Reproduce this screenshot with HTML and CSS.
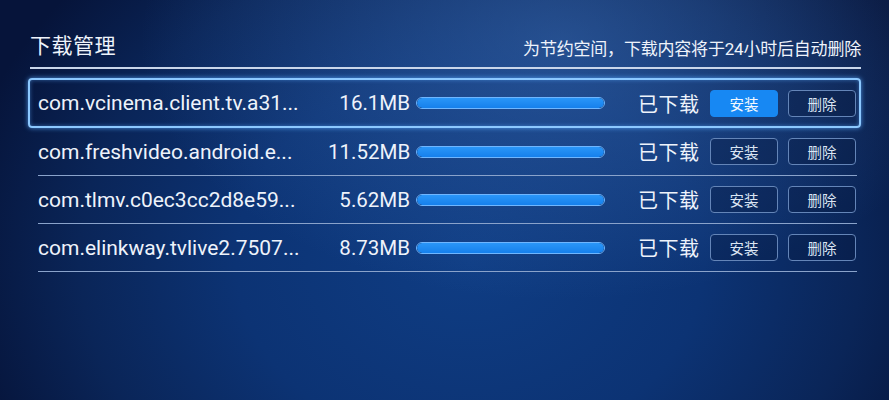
FILE: index.html
```html
<!DOCTYPE html>
<html lang="zh-CN">
<head>
<meta charset="utf-8">
<title>下载管理</title>
<link rel="stylesheet" href="styles.css">
</head>
<body>
<div class="screen">
  <header class="header">
    <h1 class="title">下载管理</h1>
    <p class="note">为节约空间，下载内容将于24小时后自动删除</p>
  </header>
  <div class="list">
    <div class="row focused">
      <div class="cells">
        <span class="name">com.vcinema.client.tv.a31...</span>
        <span class="size">16.1MB</span>
        <span class="bar"><span class="fill" style="width:100%"></span></span>
        <span class="status">已下载</span>
        <span class="btn primary">安装</span>
        <span class="btn">删除</span>
      </div>
    </div>
    <div class="row">
      <div class="cells">
        <span class="name">com.freshvideo.android.e...</span>
        <span class="size">11.52MB</span>
        <span class="bar"><span class="fill" style="width:100%"></span></span>
        <span class="status">已下载</span>
        <span class="btn">安装</span>
        <span class="btn">删除</span>
      </div>
    </div>
    <div class="row">
      <div class="cells">
        <span class="name">com.tlmv.c0ec3cc2d8e59...</span>
        <span class="size">5.62MB</span>
        <span class="bar"><span class="fill" style="width:100%"></span></span>
        <span class="status">已下载</span>
        <span class="btn">安装</span>
        <span class="btn">删除</span>
      </div>
    </div>
    <div class="row">
      <div class="cells">
        <span class="name">com.elinkway.tvlive2.7507...</span>
        <span class="size">8.73MB</span>
        <span class="bar"><span class="fill" style="width:100%"></span></span>
        <span class="status">已下载</span>
        <span class="btn">安装</span>
        <span class="btn">删除</span>
      </div>
    </div>
  </div>
</div>
</body>
</html>
```
FILE: styles.css
```css
html, body {
  margin: 0;
  padding: 0;
}
body {
  width: 889px;
  height: 400px;
  overflow: hidden;
  font-family: Roboto, "Noto Sans CJK SC", sans-serif;
  color: #eef3fb;
}
.screen {
  width: 889px;
  height: 400px;
  box-sizing: border-box;
  padding-top: 30px;
  background:
    radial-gradient(ellipse 420px 260px at 560px 40px, rgba(70,120,190,0.45), rgba(70,120,190,0) 100%),
    radial-gradient(ellipse 520px 420px at 470px 260px, #0f3d84 0%, #0c3374 45%, #0a2558 75%, #06143a 100%);
}
.header {
  margin: 0 28px 0 30px;
  height: 37px;
  display: flex;
  align-items: flex-end;
  justify-content: space-between;
  border-bottom: 2px solid #c9d6ea;
}
.title {
  margin: 0 0 9px 0;
  font-size: 21px;
  font-weight: normal;
  line-height: 24px;
  letter-spacing: 0.5px;
}
.note {
  margin: 0 0 8px 0;
  font-size: 17px;
  line-height: 20px;
  letter-spacing: -0.2px;
}
.list {
  margin: 9px 0 0 28px;
  width: 833px;
}
.row {
  margin: 0 4px 0 10px;
  height: 47px;
  border-bottom: 1px solid #8aa3cb;
  display: flex;
  align-items: center;
}
.row.focused {
  margin: 0;
  height: 46px;
  padding: 0 2px 0 8px;
  border: 2px solid #8cc8ff;
  border-radius: 4px;
  box-shadow: 0 0 5px rgba(90,170,255,0.8), inset 0 0 4px rgba(90,170,255,0.5);
}
.cells {
  display: flex;
  align-items: center;
  width: 819px;
}
.name {
  width: 290px;
  font-size: 21px;
  white-space: nowrap;
}
.size {
  width: 82px;
  text-align: right;
  font-size: 20.5px;
}
.bar {
  margin-left: 6px;
  width: 189px;
  height: 12px;
  box-sizing: border-box;
  border-radius: 6px;
  background: #0c2a60;
  border: 1px solid #6fb6ff;
  overflow: hidden;
  display: flex;
}
.fill {
  display: block;
  height: 100%;
  background: linear-gradient(#2a96f8, #1680ec);
  border-radius: 6px;
}
.status {
  margin-left: 33px;
  width: 62px;
  font-size: 20px;
  letter-spacing: 0.5px;
}
.btn {
  margin-left: 10px;
  width: 68px;
  height: 27px;
  box-sizing: border-box;
  border: 1px solid #6485b8;
  border-radius: 4px;
  background: rgba(6,22,60,0.35);
  display: flex;
  align-items: center;
  justify-content: center;
  font-size: 14.5px;
  color: #dbe5f3;
}
.btn.primary {
  background: #1788f3;
  border-color: #1788f3;
  color: #f3f8ff;
}
```
